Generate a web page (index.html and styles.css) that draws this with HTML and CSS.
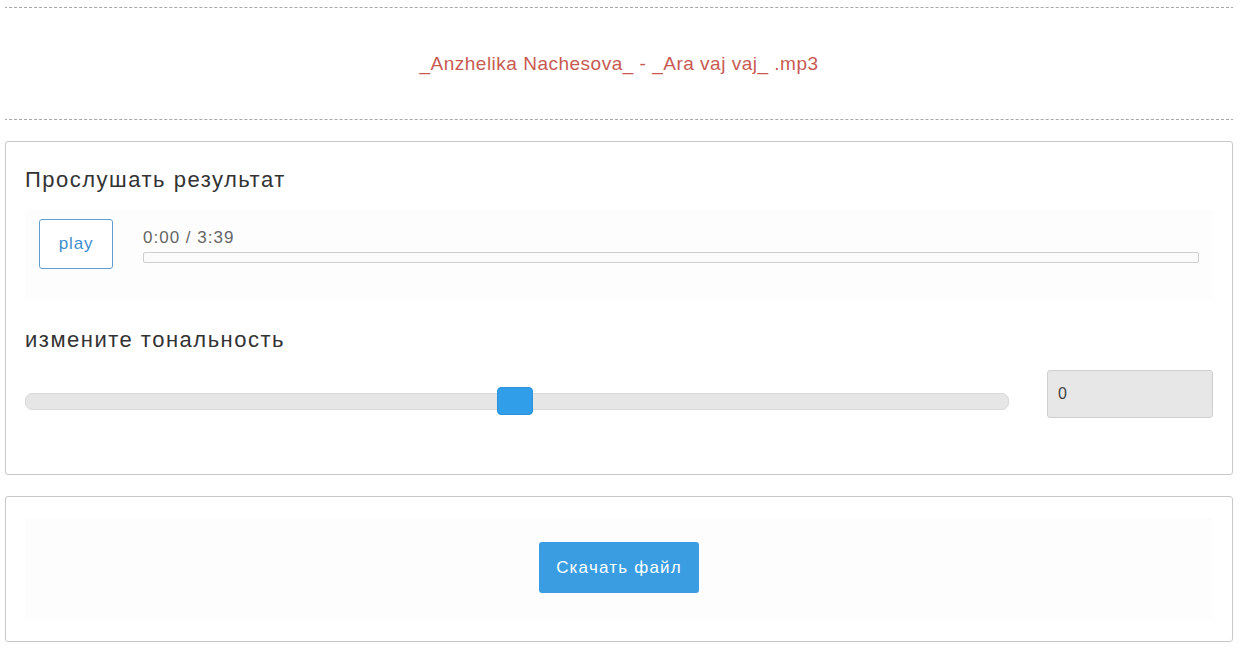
FILE: index.html
```html
<!DOCTYPE html>
<html lang="ru">
<head>
<meta charset="utf-8">
<title>Изменить тональность</title>
<link rel="stylesheet" href="styles.css">
</head>
<body>
  <div class="file-drop">
    <span class="file-name">_Anzhelika Nachesova_ - _Ara vaj vaj_ .mp3</span>
  </div>

  <section class="panel panel-result">
    <h2 class="panel-title">Прослушать результат</h2>
    <div class="player">
      <button class="play-btn" type="button">play</button>
      <div class="player-track">
        <div class="player-time">0:00 / 3:39</div>
        <div class="progress"></div>
      </div>
    </div>

    <h2 class="panel-title pitch-title">измените тональность</h2>
    <div class="pitch-row">
      <div class="slider">
        <div class="slider-thumb"></div>
      </div>
      <input class="pitch-value" type="text" value="0" readonly>
    </div>
  </section>

  <section class="panel panel-download">
    <div class="download-area">
      <button class="download-btn" type="button">Скачать файл</button>
    </div>
  </section>
</body>
</html>
```

FILE: styles.css
```css
html, body {
  background: #ffffff;
}

body {
  margin: 7px 5px 0 5px;
  font-family: "Liberation Sans", Arial, Helvetica, sans-serif;
  color: #333333;
}

.file-drop {
  margin: 0 -1px;
  height: 113px;
  box-sizing: border-box;
  border: 1px dashed #a8a8a8;
  display: flex;
  align-items: center;
  justify-content: center;
}

.file-name {
  font-size: 19px;
  letter-spacing: 0.5px;
  color: #c75b52;
  line-height: 20px;
}

.panel {
  margin-top: 21px;
  border: 1px solid #c8c8c8;
  border-radius: 3px;
  background: #ffffff;
}

.panel-result {
  padding: 25px 19px 56px 19px;
}

.panel-title {
  margin: 0;
  font-size: 22px;
  font-weight: normal;
  letter-spacing: 1.5px;
  line-height: 25px;
  color: #333333;
}

.player {
  margin-top: 18px;
  height: 90px;
  box-sizing: border-box;
  padding: 9px 14px 0 14px;
  background: #fdfdfd;
  display: flex;
  align-items: flex-start;
}

.play-btn {
  flex: 0 0 74px;
  height: 50px;
  margin: 0;
  padding: 0;
  border: 1px solid #5e9fcf;
  border-radius: 3px;
  background: #ffffff;
  color: #3f8ecf;
  font-family: inherit;
  font-size: 17px;
  letter-spacing: 0.8px;
}

.player-track {
  flex: 1;
  margin-left: 30px;
  padding-top: 9px;
}

.player-time {
  font-size: 17px;
  letter-spacing: 1px;
  line-height: 19px;
  color: #666666;
}

.progress {
  margin-top: 5px;
  height: 9px;
  border: 1px solid #cfcfcf;
  border-radius: 2px;
  background: #fbfbfb;
}

.pitch-title {
  margin-top: 27px;
}

.pitch-row {
  margin-top: 18px;
  display: flex;
  align-items: flex-start;
  gap: 38px;
}

.slider {
  position: relative;
  flex: 1;
  margin-top: 23px;
  height: 15px;
  border: 1px solid #dadada;
  border-radius: 7px;
  background: #e6e6e6;
}

.slider-thumb {
  position: absolute;
  left: 471px;
  top: -7px;
  width: 36px;
  height: 28px;
  box-sizing: border-box;
  border: 1px solid #2b92db;
  border-radius: 4px;
  background: #309ee9;
}

.pitch-value {
  flex: 0 0 166px;
  width: 166px;
  height: 48px;
  box-sizing: border-box;
  margin: 0;
  padding: 0 10px;
  border: 1px solid #cfcfcf;
  border-radius: 3px;
  background: #e7e7e7;
  font-family: inherit;
  font-size: 16px;
  color: #444444;
  outline: none;
}

.panel-download {
  padding: 21px 19px;
}

.download-area {
  height: 102px;
  box-sizing: border-box;
  padding-top: 24px;
  background: #fdfdfd;
  display: flex;
  justify-content: center;
  align-items: flex-start;
}

.download-btn {
  width: 160px;
  height: 51px;
  margin: 0;
  padding: 0;
  border: none;
  border-radius: 3px;
  background: #3a9de2;
  color: #ffffff;
  font-family: inherit;
  font-size: 17px;
  letter-spacing: 1.2px;
}
```
